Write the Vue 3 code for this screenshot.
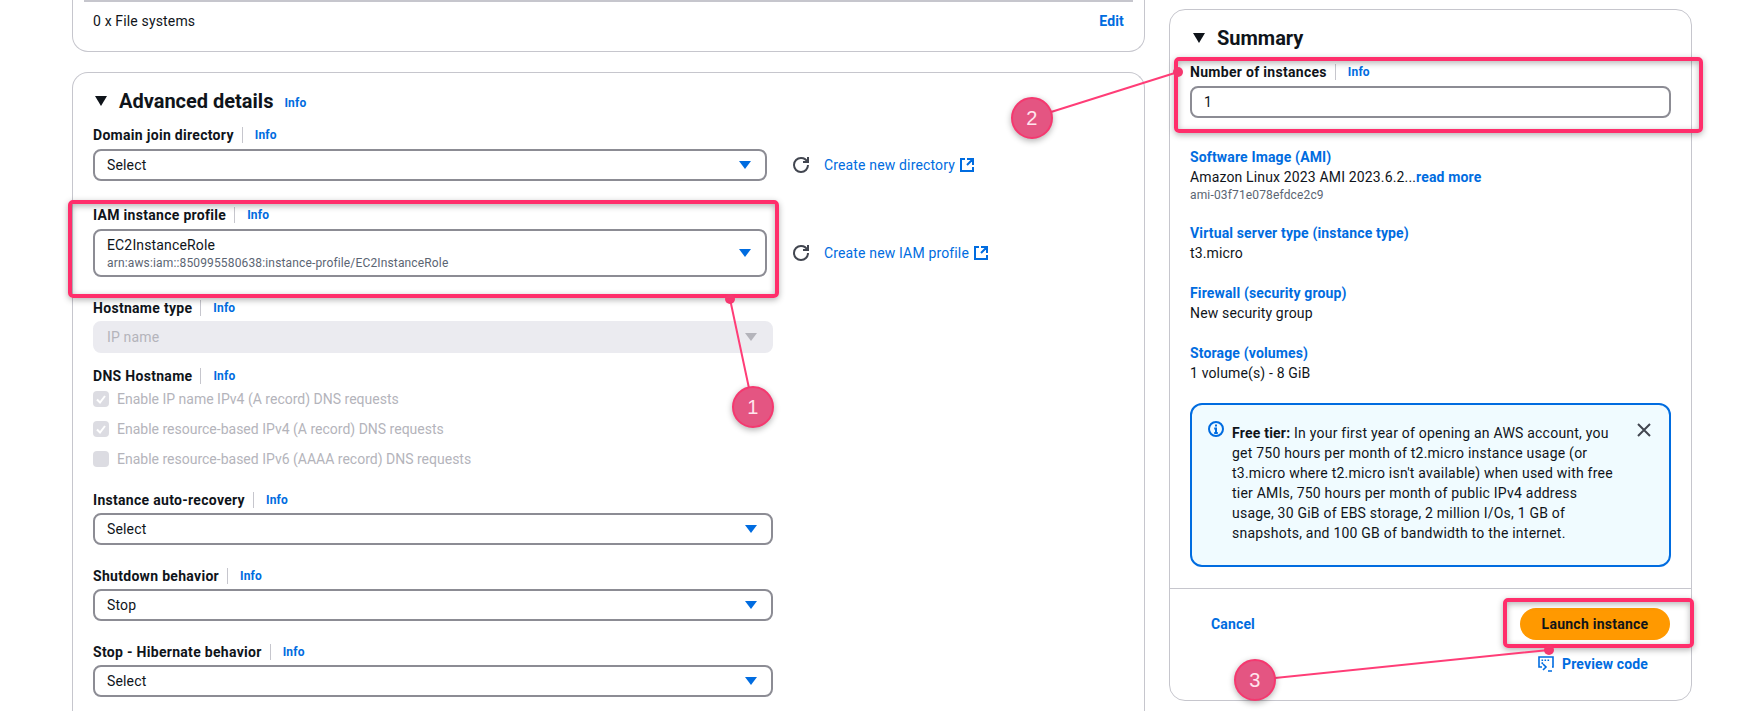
<script setup>
const lower = [
  { label: 'Instance auto-recovery', value: 'Select' },
  { label: 'Shutdown behavior', value: 'Stop' },
  { label: 'Stop - Hibernate behavior', value: 'Select' },
]
const checks = [
  { text: 'Enable IP name IPv4 (A record) DNS requests', on: true },
  { text: 'Enable resource-based IPv4 (A record) DNS requests', on: true },
  { text: 'Enable resource-based IPv6 (AAAA record) DNS requests', on: false },
]
const summary = [
  { title: 'Virtual server type (instance type)', value: 't3.micro' },
  { title: 'Firewall (security group)', value: 'New security group' },
  { title: 'Storage (volumes)', value: '1 volume(s) - 8 GiB' },
]
const badges = [
  { n: 1, x: 753, y: 407 },
  { n: 2, x: 1032, y: 118 },
  { n: 3, x: 1255, y: 680 },
]
</script>

<template>
  <div class="page">
    <main class="left">
      <section class="card top-card">
        <div class="top-rule"></div>
        <div class="top-row"><span>0 x File systems</span><a class="edit">Edit</a></div>
      </section>

      <section class="card adv">
        <header class="head">
          <span class="caret"></span>
          <h2>Advanced details</h2>
          <a class="info head-info">Info</a>
        </header>

        <div class="label domain-label"><b>Domain join directory</b><a class="info">Info</a></div>
        <div class="with-action">
          <div class="select short"><span>Select</span><i class="arrow"></i></div>
          <svg class="refresh" viewBox="0 0 16 16"><path d="M10 5h5V0" /><path d="M15 8a6.96 6.96 0 0 1-7 7 6.96 6.96 0 0 1-7-7 6.96 6.96 0 0 1 7-7 6.87 6.87 0 0 1 6.45 4.39" /></svg>
          <a class="create">Create new directory</a>
          <svg class="ext" viewBox="0 0 16 16"><path d="M14 8.01v-6H8M14.02 2 8 8.02M6 2.01H2v12h12v-3.99" /></svg>
        </div>

        <div class="label iam-label"><b>IAM instance profile</b><a class="info">Info</a></div>
        <div class="with-action">
          <div class="select short tall">
            <div class="stack">
              <span>EC2InstanceRole</span>
              <small>arn:aws:iam::850995580638:instance-profile/EC2InstanceRole</small>
            </div>
            <i class="arrow"></i>
          </div>
          <svg class="refresh" viewBox="0 0 16 16"><path d="M10 5h5V0" /><path d="M15 8a6.96 6.96 0 0 1-7 7 6.96 6.96 0 0 1-7-7 6.96 6.96 0 0 1 7-7 6.87 6.87 0 0 1 6.45 4.39" /></svg>
          <a class="create">Create new IAM profile</a>
          <svg class="ext" viewBox="0 0 16 16"><path d="M14 8.01v-6H8M14.02 2 8 8.02M6 2.01H2v12h12v-3.99" /></svg>
        </div>

        <div class="label host-label"><b>Hostname type</b><a class="info">Info</a></div>
        <div class="select disabled"><span>IP name</span><i class="arrow"></i></div>

        <div class="label dns-label"><b>DNS Hostname</b><a class="info">Info</a></div>
        <div class="checks">
          <label v-for="c in checks" :key="c.text" class="check">
            <span class="box">
              <svg v-if="c.on" viewBox="0 0 14 14"><path d="M3 7.5 6 10.5 11 4" /></svg>
            </span>
            {{ c.text }}
          </label>
        </div>

        <div v-for="f in lower" :key="f.label" class="lower">
          <div class="label"><b>{{ f.label }}</b><a class="info">Info</a></div>
          <div class="select"><span>{{ f.value }}</span><i class="arrow"></i></div>
        </div>
      </section>
    </main>

    <aside class="card summary">
      <header class="head sum-head">
        <span class="caret"></span>
        <h2>Summary</h2>
      </header>

      <div class="sum-body">
        <div class="label sum-label"><b>Number of instances</b><a class="info">Info</a></div>
        <div class="select num"><span>1</span></div>

        <div class="item first">
          <a class="item-title">Software Image (AMI)</a>
          <p>Amazon Linux 2023 AMI 2023.6.2...<a class="more">read more</a></p>
          <small>ami-03f71e078efdce2c9</small>
        </div>
        <div v-for="s in summary" :key="s.title" class="item">
          <a class="item-title">{{ s.title }}</a>
          <p>{{ s.value }}</p>
        </div>

        <div class="alert">
          <svg class="alert-icon" viewBox="0 0 16 16"><circle cx="8" cy="8" r="7" /><path d="M8 12V7.5H6.2M6.2 12h3.6" /><path class="dot" d="M7 3.6h2v2H7z" /></svg>
          <p><b>Free tier:</b> In your first year of opening an AWS account, you get 750 hours per month of t2.micro instance usage (or t3.micro where t2.micro isn't available) when used with free tier AMIs, 750 hours per month of public IPv4 address usage, 30 GiB of EBS storage, 2 million I/Os, 1 GB of snapshots, and 100 GB of bandwidth to the internet.</p>
          <svg class="close" viewBox="0 0 16 16"><path d="m2 2 12 12M14 2 2 14" /></svg>
        </div>
      </div>

      <footer class="foot">
        <a class="cancel">Cancel</a>
        <div class="foot-right">
          <button class="launch">Launch instance</button>
          <a class="preview">
            <svg viewBox="0 0 16 16"><path d="M4 11H1V1h14v10h-1" /><path d="M5 8l3 3-3 3M10 15h4" /><path class="dots" d="M3.5 3.5h1.6v1.6H3.5zM6.5 3.5h1.6v1.6H6.5zM9.5 3.5h1.6v1.6H9.5zM3.5 6.3h1.6v1.6H3.5z" /></svg>
            Preview code
          </a>
        </div>
      </footer>
    </aside>

    <!-- Annotation layer drawn over the screenshot -->
    <div class="mark mark-1"></div>
    <div class="mark mark-2"></div>
    <div class="mark mark-3"></div>
    <svg class="lines" viewBox="0 0 1752 711">
      <path d="M730 299 753 407M1178 72 1032 118M1549 650 1255 680" />
      <circle cx="730" cy="299" r="5" />
      <circle cx="1178" cy="72" r="5" />
      <circle cx="1549" cy="650" r="5" />
    </svg>
    <div v-for="b in badges" :key="b.n" class="badge" :style="{ left: b.x - 21 + 'px', top: b.y - 21 + 'px' }">{{ b.n }}</div>
  </div>
</template>

<style>
html, body { margin: 0; background: #fff; }
</style>

<style scoped>
.page {
  position: relative;
  display: flex;
  align-items: flex-start;
  width: 1752px;
  height: 711px;
  overflow: hidden;
  background: #fff;
  color: #0f141a;
  font: 14px/20px Roboto, "Liberation Sans", sans-serif;
  letter-spacing: .15px;
}
a { color: #006ce0; }
.left { width: 1073px; margin-left: 72px; flex: none; }
.card { border: 1px solid #c6c6cd; border-radius: 16px; box-sizing: border-box; background: #fff; }
.top-card { height: 52px; border-top: 0; border-radius: 0 0 16px 16px; padding: 0 20px; }
.top-rule { border-top: 2px solid #c6c6cd; margin: 0 -9px; }
.top-row { display: flex; justify-content: space-between; padding-top: 9px; }
.edit { font-weight: 700; }
.adv { margin-top: 20px; padding: 16px 20px 0; height: 700px; border-bottom: 0; }
.head { display: flex; align-items: center; height: 24px; }
.caret { width: 0; height: 0; border-left: 6px solid transparent; border-right: 6px solid transparent; border-top: 10px solid #0f141a; margin: 0 12px 0 2px; }
h2 { margin: 0; font-size: 20px; line-height: 24px; font-weight: 700; letter-spacing: 0; }
.head-info { margin: 3px 0 0 11px; }
.info { font-size: 12px; font-weight: 700; line-height: 16px; }
.label { display: flex; align-items: center; height: 22px; margin-bottom: 3px; margin-top: 9px; }
.domain-label { margin-top: 11px; }
.label b { font-weight: 700; padding-right: 8px; margin-right: 12px; border-right: 1px solid #c6c6cd; line-height: 16px; letter-spacing: .3px; }
.select {
  display: flex; align-items: center; justify-content: space-between;
  height: 32px; width: 680px; box-sizing: border-box;
  padding: 0 14px 0 12px;
  border: 2px solid #8c8c94; border-radius: 8px;
}
.arrow { width: 0; height: 0; border-left: 6px solid transparent; border-right: 6px solid transparent; border-top: 8px solid #006ce0; }
.with-action { display: flex; align-items: center; }
.short { width: 674px; flex: none; }
.tall { height: 48px; }
.stack { display: flex; flex-direction: column; }
.stack small { font-size: 12px; line-height: 16px; color: #5b6573; }
.refresh { width: 16px; height: 16px; margin: 0 15px 0 26px; fill: none; stroke: #424650; stroke-width: 2; flex: none; }
.create { white-space: nowrap; }
.ext { width: 16px; height: 16px; margin-left: 4px; fill: none; stroke: #006ce0; stroke-width: 2; }
.iam-label { margin-top: 23px; }
.host-label { margin-top: 20px; margin-bottom: 2px; }
.disabled { background: #ebebf0; border-color: #ebebf0; color: #b4b4bb; }
.disabled .arrow { border-top-color: #b4b4bb; }
.dns-label { margin-top: 12px; margin-bottom: 2px; }
.checks { display: flex; flex-direction: column; gap: 10px; color: #b4b4bb; letter-spacing: 0; }
.check { display: flex; align-items: center; width: fit-content; height: 20px; gap: 8px; }
.box { width: 16px; height: 16px; border-radius: 4px; background: #dcdce2; flex: none; display: flex; }
.box svg { width: 14px; height: 14px; margin: 1px; fill: none; stroke: #fff; stroke-width: 2; }
.lower { margin-top: 20px; }
.lower .label { margin-top: 0; margin-bottom: 2px; }
.summary { position: relative; width: 523px; height: 692px; margin: 9px 0 0 24px; flex: none; padding-top: 16px; }
.sum-head { padding-left: 21px; }
.sum-body { padding: 0 20px; }
.sum-label { margin-top: 11px; }
.num { width: 481px; }
.item { margin-top: 20px; }
.item.first { margin-top: 29px; }
.item-title { display: block; font-weight: 700; }
.item p { margin: 0; }
.item small { display: block; font-size: 12px; line-height: 16px; color: #5b6573; }
.more { font-weight: 700; }
.alert { position: relative; width: 481px; height: 164px; box-sizing: border-box; margin-top: 20px; padding: 18px 54px 0 40px; background: #f0fbff; border: 2px solid #006ce0; border-radius: 12px; letter-spacing: .22px; }
.alert p { margin: 0; }
.alert b { font-weight: 700; }
.alert-icon { position: absolute; left: 16px; top: 16px; width: 16px; height: 16px; fill: none; stroke: #006ce0; stroke-width: 2; }
.alert-icon .dot { fill: #006ce0; stroke: none; }
.close { position: absolute; right: 17px; top: 17px; width: 16px; height: 16px; fill: none; stroke: #424650; stroke-width: 2; }
.foot { position: absolute; left: 0; right: 0; top: 578px; bottom: 0; border-top: 1px solid #c6c6cd; display: flex; justify-content: space-between; padding: 19px 21px 0 41px; }
.cancel { font-weight: 700; line-height: 32px; }
.foot-right { display: flex; flex-direction: column; align-items: flex-end; }
.launch { width: 150px; height: 32px; border: 0; border-radius: 16px; background: #ff9900; color: #0f141a; font: 700 14px/20px Roboto, "Liberation Sans", sans-serif; letter-spacing: .25px; padding: 0; }
.preview { display: flex; align-items: center; gap: 8px; font-weight: 700; margin: 14px 22px 0 0; }
.preview svg { width: 16px; height: 16px; fill: none; stroke: #006ce0; stroke-width: 1.6; }
.preview .dots { fill: #006ce0; stroke: none; }
.mark { position: absolute; box-sizing: border-box; border: 4px solid #ff2e6b; border-radius: 5px; box-shadow: 0 2px 6px rgba(0, 0, 0, .3), inset 0 2px 6px rgba(0, 0, 0, .3); }
.mark-1 { left: 68px; top: 200px; width: 711px; height: 98px; }
.mark-2 { left: 1174px; top: 57px; width: 529px; height: 76px; }
.mark-3 { left: 1503px; top: 598px; width: 191px; height: 50px; }
.lines { position: absolute; left: 0; top: 0; width: 1752px; height: 711px; pointer-events: none; }
.lines path { stroke: #ff3d77; stroke-width: 2; fill: none; }
.lines circle { fill: #f5386f; }
.badge {
  position: absolute; width: 42px; height: 42px; box-sizing: border-box;
  border: 2px solid #f5386f; border-radius: 50%;
  background: #e45582; color: #ffe6ee;
  display: flex; align-items: center; justify-content: center;
  font: 20px "Liberation Sans", sans-serif;
  box-shadow: 0 2px 6px rgba(0, 0, 0, .3);
}
</style>
